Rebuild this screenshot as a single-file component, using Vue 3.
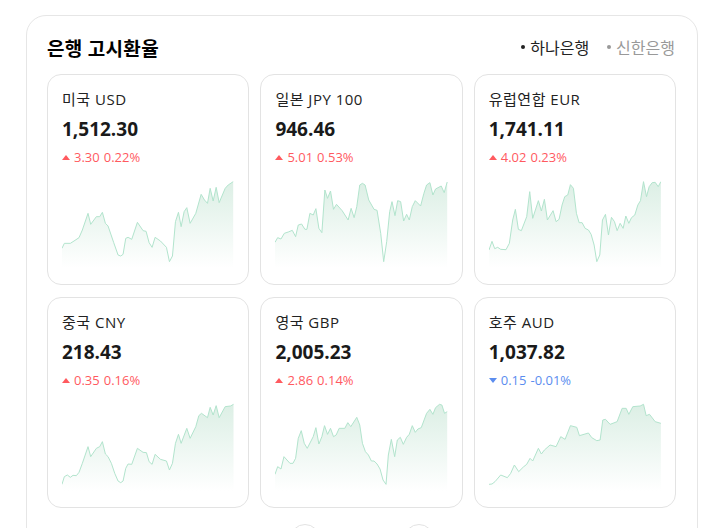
<script setup>
import { computed } from 'vue'

// traced coordinates, viewBox is 516x279 and gets drawn at 172x93
const rates = [
  {
    id: 1, name: '미국 USD', value: '1,512.30', diff: '3.30', pct: '0.22%', up: true, box: '67 15 516 279', bottom: 294,
    line: '67,235 74,220 92,220 103,213 118,203 128,180 145,130 153,163 170,140 180,140 188,127 197,160 205,168 222,218 235,255 243,258 250,253 258,205 265,202 276,208 293,157 310,182 319,184 328,218 337,232 346,202 362,213 380,232 389,275 398,258 407,155 416,127 424,170 433,125 441,113 451,160 468,130 484,73 494,90 503,100 511,55 520,93 529,52 538,98 556,55 565,45 580,35',
  },
  {
    id: 2, name: '일본 JPY 100', value: '946.46', diff: '5.01', pct: '0.53%', up: true, box: '60 15 518 279', bottom: 294,
    line: '60,217 68,203 78,207 88,190 100,186 112,181 122,200 130,165 140,162 150,178 156,178 165,130 175,135 183,116 192,175 201,188 210,60 218,85 227,63 236,118 245,103 262,122 280,150 289,115 298,143 306,110 315,45 323,40 331,45 342,90 358,118 367,121 378,190 387,275 396,215 405,125 412,95 421,137 429,92 438,95 447,153 456,133 464,150 473,110 482,92 498,108 508,70 516,45 526,38 535,75 543,57 560,48 569,68 578,36',
  },
  {
    id: 3, name: '유럽연합 EUR', value: '1,741.11', diff: '4.02', pct: '0.23%', up: true, box: '57 15 516 279', bottom: 294,
    line: '57,240 66,214 74,236 83,232 92,238 108,239 118,220 128,150 136,118 145,178 154,182 170,140 179,65 188,145 205,92 214,123 223,88 232,150 249,122 258,155 267,148 276,105 284,80 293,75 301,44 310,55 319,130 327,158 336,158 345,175 355,180 363,193 372,225 380,275 389,255 397,150 406,133 415,195 424,142 433,155 441,182 450,160 459,175 467,138 476,160 484,143 494,135 503,105 511,92 520,35 529,80 537,50 546,38 555,37 564,50 572,35',
  },
  {
    id: 4, name: '중국 CNY', value: '218.43', diff: '0.35', pct: '0.16%', up: true, box: '67 9 516 279', bottom: 288,
    line: '67,268 74,245 83,240 92,247 100,241 110,242 118,232 128,205 145,155 153,185 170,160 180,155 188,140 197,177 205,185 215,205 225,235 235,258 243,263 250,258 258,220 265,207 276,208 293,160 310,172 320,173 328,200 337,208 346,178 362,193 380,198 389,225 398,205 407,145 416,118 424,145 441,100 451,130 468,95 477,62 485,55 503,68 511,37 520,60 529,32 538,68 556,35 572,33 581,28',
  },
  {
    id: 5, name: '영국 GBP', value: '2,005.23', diff: '2.86', pct: '0.14%', up: true, box: '60 9 518 279', bottom: 288,
    line: '60,238 68,215 78,222 87,185 105,205 114,205 122,190 130,130 139,107 148,145 157,160 175,125 183,98 192,147 201,125 209,92 218,118 227,100 236,125 244,120 253,100 270,100 279,83 288,95 306,67 315,90 323,145 332,170 341,180 350,198 358,198 367,207 376,222 385,255 394,268 401,180 410,133 420,185 428,135 437,127 446,148 456,127 464,118 473,92 482,112 490,102 500,98 516,55 526,43 535,58 543,38 555,28 562,30 570,55 578,50',
  },
  {
    id: 6, name: '호주 AUD', value: '1,037.82', diff: '0.15', pct: '-0.01%', up: false, box: '57 99 516 279', bottom: 378,
    line: '57,358 66,357 75,350 92,330 112,338 122,325 133,300 146,320 160,306 170,298 180,280 188,288 205,250 214,267 223,255 240,240 258,245 272,215 285,223 301,182 320,187 328,212 355,204 365,218 380,227 390,225 398,165 406,163 420,178 441,170 456,130 468,130 476,148 488,125 510,123 520,118 528,152 538,148 555,170 572,175',
  },
]

const cards = computed(() =>
  rates.map((rate) => {
    const pts = rate.line.split(' ')
    const first = pts[0].split(',')[0]
    const last = pts[pts.length - 1].split(',')[0]
    return { ...rate, area: `${rate.line} ${last},${rate.bottom} ${first},${rate.bottom}` }
  }),
)
</script>

<template>
  <section class="panel">
    <header class="panel-head">
      <h2>은행 고시환율</h2>
      <div class="banks">
        <span class="bank active">하나은행</span>
        <span class="bank">신한은행</span>
      </div>
    </header>

    <div class="grid">
      <article v-for="card in cards" :key="card.id" class="card">
        <div class="name">{{ card.name }}</div>
        <div class="value">{{ card.value }}</div>
        <div class="change" :class="card.up ? 'up' : 'down'">
          <i class="arrow"></i>
          <span>{{ card.diff }}</span>
          <span>{{ card.pct }}</span>
        </div>
        <svg class="chart" :viewBox="card.box" preserveAspectRatio="none">
          <defs>
            <linearGradient :id="`fade-${card.id}`" x1="0" y1="0" x2="0" y2="1">
              <stop offset="0" stop-color="#dcefe5" />
              <stop offset="1" stop-color="#ffffff" />
            </linearGradient>
          </defs>
          <polygon :points="card.area" :fill="`url(#fade-${card.id})`" />
          <polyline :points="card.line" class="line" />
        </svg>
      </article>
    </div>

    <div class="pager">
      <button type="button" aria-label="이전"></button>
      <button type="button" aria-label="다음"></button>
    </div>
  </section>
</template>

<style scoped>
.panel {
  box-sizing: border-box;
  width: 672px;
  margin: 15px 0 20px 26px;
  padding: 20px;
  border: 1px solid #e6e6e6;
  border-radius: 20px;
  background: #ffffff;
  color: #111111;
  font-family: "Open Sans", "Noto Sans CJK KR", sans-serif;
}

.panel-head {
  display: flex;
  justify-content: space-between;
  align-items: center;
  height: 24px;
  margin-bottom: 14px;
}

.panel-head h2 {
  margin: 0;
  font-size: 19px;
  font-weight: 700;
  letter-spacing: 0.3px;
  color: #000000;
}

.banks {
  display: flex;
  gap: 18px;
  margin-right: 2px;
  position: relative;
  top: -1px;
}

.bank {
  display: flex;
  align-items: center;
  gap: 5px;
  font-size: 16px;
  color: #999999;
}

.bank::before {
  content: '';
  width: 4px;
  height: 4px;
  border-radius: 50%;
  background: #999999;
}

.bank.active {
  color: #222222;
}

.bank.active::before {
  background: #222222;
}

.grid {
  display: grid;
  grid-template-columns: repeat(3, 202.2px);
  gap: 12px 11.2px;
}

.card {
  box-sizing: border-box;
  display: flex;
  flex-direction: column;
  height: 211px;
  padding: 14px 14px 0;
  border: 1px solid #e3e3e3;
  border-radius: 14px;
  background: #ffffff;
}

.name {
  font-size: 15px;
  line-height: 20px;
  letter-spacing: 0.5px;
  color: #222222;
}

.value {
  margin-top: 7px;
  font-size: 19px;
  line-height: 26px;
  font-weight: 700;
  color: #1a1a1a;
}

.change {
  display: flex;
  align-items: center;
  gap: 4px;
  margin-top: 6px;
  font-size: 13px;
  line-height: 18px;
}

.change.up {
  color: #ff5a5f;
}

.change.down {
  color: #5b8def;
}

.arrow {
  width: 0;
  height: 0;
  border-left: 4px solid transparent;
  border-right: 4px solid transparent;
}

.up .arrow {
  border-bottom: 5px solid #ff5a5f;
}

.down .arrow {
  border-top: 5px solid #5b8def;
}

.chart {
  display: block;
  flex: none;
  width: 100%;
  height: 93px;
  margin-top: 9px;
}

.line {
  fill: none;
  stroke: #b2e4cd;
  stroke-width: 1;
  vector-effect: non-scaling-stroke;
  stroke-linejoin: round;
}

.pager {
  display: flex;
  justify-content: center;
  gap: 84px;
  margin-top: 16px;
}

.pager button {
  width: 30px;
  height: 30px;
  padding: 0;
  border: 1px solid #e3e3e3;
  border-radius: 50%;
  background: #ffffff;
}
</style>

<style>
html,
body {
  overflow: hidden;
}
</style>
